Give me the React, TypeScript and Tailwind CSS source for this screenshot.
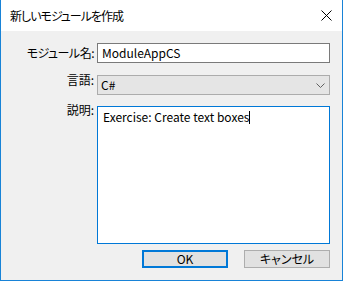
const font = "font-['Noto_Sans_CJK_JP','Noto_Sans',sans-serif] [font-feature-settings:'palt']";

function CloseIcon() {
  return (
    <svg width="11" height="11" viewBox="0 0 11 11" className="block">
      <path d="M0.5 0.5 L10.5 10.5 M10.5 0.5 L0.5 10.5" stroke="#000" strokeWidth="1" />
    </svg>
  );
}

function Chevron() {
  return (
    <svg width="9" height="5" viewBox="0 0 9 5" className="block">
      <path d="M0.5 0.5 L4.5 4.5 L8.5 0.5" stroke="#606060" strokeWidth="1" fill="none" />
    </svg>
  );
}

export default function App() {
  return (
    <div className={`w-[343px] h-[281px] border border-[#1883d7] border-t-0 flex flex-col text-[12px] text-black ${font}`}>
      {/* title bar */}
      <div className="h-[31px] bg-white flex items-center justify-between pl-[9px] pr-[10px] shrink-0">
        <span className="leading-none tracking-[-1px]">新しいモジュールを作成</span>
        <CloseIcon />
      </div>

      {/* body */}
      <div className="flex-1 bg-[#f0f0f0] flex flex-col pt-[12px] pr-[12px]">
        <div className="flex items-start">
          <label className="w-[96px] pr-[3px] text-right pt-[2px] leading-[16px] tracking-[-0.5px]">モジュール名:</label>
          <div className="flex-1 h-[20px] bg-white border border-[#7a7a7a] pl-[4px] flex items-center leading-none">
            ModuleAppCS
          </div>
        </div>

        <div className="flex items-start mt-[12px]">
          <label className="w-[96px] pr-[3px] text-right leading-[12px] -mt-[1px]">言語:</label>
          <div className="flex-1 h-[20px] bg-[#e5e5e5] border border-[#acacac] pl-[3px] pr-[4px] flex items-center justify-between leading-none">
            <span>C#</span>
            <Chevron />
          </div>
        </div>

        <div className="flex items-start mt-[11px]">
          <label className="w-[96px] pr-[3px] text-right -mt-[4px] leading-[16px]">説明:</label>
          <div className="flex-1 h-[138px] bg-white border border-[#0078d7] pl-[5px] pt-[2px] leading-[16px]">
            <span>Exercise: Create text boxes</span>
            <span className="inline-block w-px h-[13px] bg-black align-[-2px]" />
          </div>
        </div>

        <div className="flex justify-end gap-[16px] mt-[6px]">
          <button className="w-[86px] h-[18px] bg-[#e1e1e1] border-2 border-[#0078d7] flex items-center justify-center leading-none">
            OK
          </button>
          <button className="w-[86px] h-[18px] bg-[#e1e1e1] border border-[#adadad] flex items-center justify-center leading-none">
            キャンセル
          </button>
        </div>
      </div>
    </div>
  );
}
